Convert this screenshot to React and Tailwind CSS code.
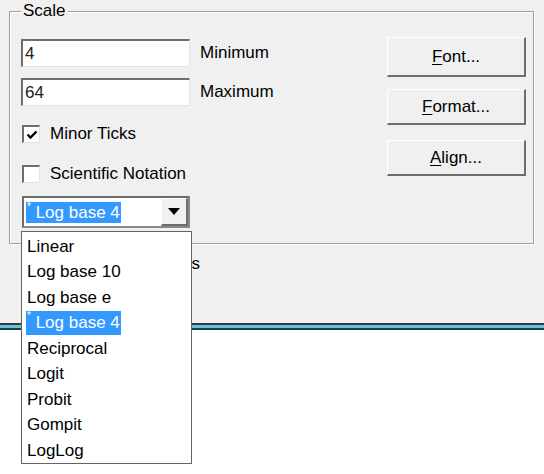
import { useState } from "react";

const scales = [
  "Linear",
  "Log base 10",
  "Log base e",
  "* Log base 4",
  "Reciprocal",
  "Logit",
  "Probit",
  "Gompit",
  "LogLog",
];

const Star = () => <span className="text-[10px] align-top leading-none">*</span>;

const Check = ({ checked }) => (
  <div className="w-[18px] h-[18px] bg-white border-t-2 border-l-2 border-[#6e6e6e] border-r border-b border-r-[#e3e3e3] border-b-[#e3e3e3] flex items-center justify-center">
    {checked && (
      <svg width="12" height="12" viewBox="0 0 12 12">
        <path d="M1.5 5.5 L4.5 8.5 L10.5 2.5" stroke="#000" strokeWidth="2.4" fill="none" />
      </svg>
    )}
  </div>
);

const Field = ({ value, label }) => (
  <div className="flex items-center">
    <div className="w-[169px] h-[28px] bg-white border-t-2 border-l-2 border-[#6e6e6e] border-r border-b border-r-[#e3e3e3] border-b-[#e3e3e3] flex items-center pl-[2px] text-[#202020]">
      {value}
    </div>
    <span className="ml-[10px]">{label}</span>
  </div>
);

const Btn = ({ hot, rest, h }) => (
  <button className={"w-[139px] bg-[#f0f0f0] border-t border-l border-white border-r-2 border-b-2 border-r-[#6e6e6e] border-b-[#6e6e6e] flex items-center justify-center " + h}>
    <span className="underline underline-offset-2">{hot}</span>
    {rest}
  </button>
);

export default function App() {
  const [sel] = useState(3);
  return (
    <div
      className="relative w-[544px] h-[474px] overflow-hidden bg-white text-[17px] leading-[20px] text-black"
      style={{ fontFamily: '"Liberation Sans", Arial, sans-serif' }}
    >
      <div className="h-[323px] bg-[#f0f0f0] pt-[11px] pl-[9px]">
        <div className="relative w-[525px] h-[233px] border border-[#a0a0a0] shadow-[inset_1px_1px_0_#fff,1px_1px_0_#fff] flex pl-[11px] pt-[27px]">
          <span className="absolute left-[11px] -top-[12px] bg-[#f0f0f0] px-[2px] leading-[22px]">Scale</span>
          <div className="flex flex-col">
            <Field value="4" label="Minimum" />
            <div className="mt-[11px]">
              <Field value="64" label="Maximum" />
            </div>
            <div className="mt-[18px] flex items-center ml-[1px]">
              <Check checked />
              <span className="ml-[10px]">Minor Ticks</span>
            </div>
            <div className="mt-[20px] flex items-center ml-[1px]">
              <Check />
              <span className="ml-[10px]">Scientific Notation</span>
            </div>
            <div className="mt-[12px] ml-[1px] w-[168px] h-[32px] bg-white border-t-2 border-l-2 border-[#6e6e6e] border-r-2 border-b-2 border-r-[#8a8a8a] border-b-[#8a8a8a] flex items-center">
              <div className="flex-1 pl-[2px]">
                <span className="bg-[#3399ff] text-white px-[1px] leading-[21px] inline-block">
                  <Star /> Log base 4
                </span>
              </div>
              <div className="w-[27px] h-full bg-[#f0f0f0] border-r-2 border-b-2 border-[#6e6e6e] border-t border-l border-t-white border-l-white flex items-center justify-center">
                <svg width="12" height="7" viewBox="0 0 12 7">
                  <path d="M0 0 H12 L6 7 Z" fill="#000" />
                </svg>
              </div>
            </div>
          </div>
          <div className="ml-auto mr-[7px] -mt-[2px] flex flex-col">
            <Btn hot="F" rest="ont..." h="h-[40px]" />
            <div className="mt-[12px]">
              <Btn hot="F" rest="ormat..." h="h-[36px]" />
            </div>
            <div className="mt-[15px]">
              <Btn hot="A" rest="lign..." h="h-[36px]" />
            </div>
          </div>
        </div>
        <div className="mt-[9px] ml-[13px] w-[178px] text-right leading-[22px]">Tick Labels</div>
      </div>
      <div className="h-[2px] bg-[#3c3c3c]" />
      <div className="h-[3px] bg-[#63c5e0]" />
      <div className="h-[2px] bg-[#1e3c44]" />

      <div className="absolute left-[21px] top-[231px] w-[171px] h-[233px] bg-white border border-[#646464] pt-[2px]">
        {scales.map((s, i) => (
          <div key={s} className="h-[25.5px] flex items-center pl-[4px]">
            {i === sel ? (
              <span className="bg-[#3399ff] text-white px-[1px] leading-[24px] inline-block">
                <Star /> Log base 4
              </span>
            ) : (
              <span className="px-[1px]">{s}</span>
            )}
          </div>
        ))}
      </div>
    </div>
  );
}
